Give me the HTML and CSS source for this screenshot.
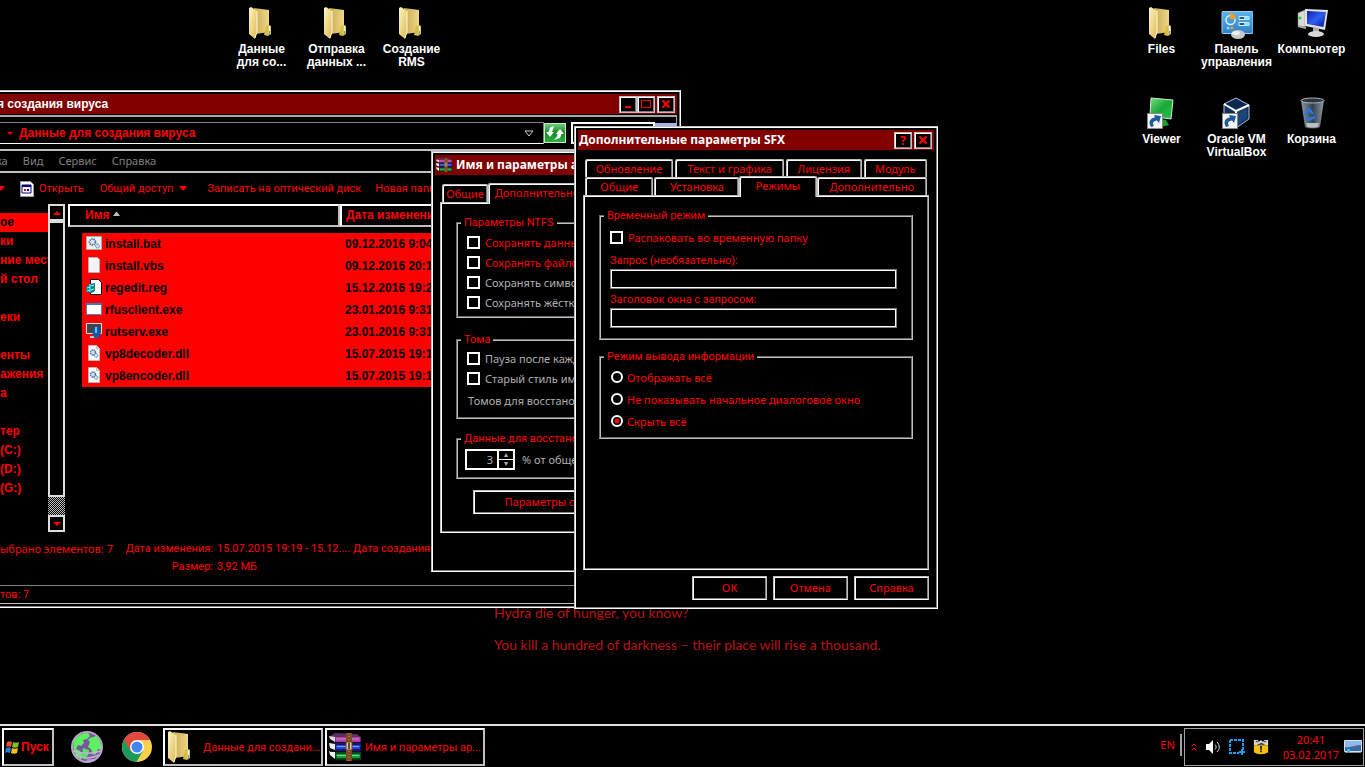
FILE: index.html
```html
<!DOCTYPE html>
<html lang="ru">
<head>
<meta charset="utf-8">
<title>Рабочий стол</title>
<link rel="stylesheet" href="styles.css">
</head>
<body>
<svg class="defs" aria-hidden="true">
  <defs>
    <linearGradient id="gf" x1="0" x2="1" y1="0" y2="1"><stop offset="0" stop-color="#fff6c4"/><stop offset="1" stop-color="#dcb84e"/></linearGradient>
    <linearGradient id="gb" x1="0" x2="1" y1="0" y2="0"><stop offset="0" stop-color="#c9a94e"/><stop offset="1" stop-color="#efd88a"/></linearGradient>
    <linearGradient id="gp" x1="0" x2="0" y1="0" y2="1"><stop offset="0" stop-color="#5cb4ea"/><stop offset="1" stop-color="#2f7fc4"/></linearGradient>
    <linearGradient id="gs" x1="0" x2="1" y1="0" y2="1"><stop offset="0" stop-color="#0a1ea8"/><stop offset=".5" stop-color="#3060f0"/><stop offset="1" stop-color="#0010a0"/></linearGradient>
    <linearGradient id="gg" x1="0" x2="1" y1="0" y2="1"><stop offset="0" stop-color="#6fe080"/><stop offset=".5" stop-color="#1aa838"/><stop offset="1" stop-color="#2cc24c"/></linearGradient>
    <linearGradient id="gt" x1="0" x2="1" y1="0" y2="0"><stop offset="0" stop-color="#8b9aa6"/><stop offset=".5" stop-color="#35424e"/><stop offset="1" stop-color="#8b9aa6"/></linearGradient>
    <symbol id="folder" viewBox="0 0 32 32">
      <path d="M8 1l15 2v22l-13 2z" fill="url(#gb)"/>
      <path d="M3 1l2-1 6 4v21l-2 7-6-5z" fill="url(#gf)"/>
      <path d="M11 4v21l-2 6" fill="none" stroke="#fffbe0"/>
      <path d="M20 19l3-1 2 1v8l-3 2-4-1z" fill="#d9bd3c"/>
      <path d="M23.500 19v8" stroke="#e8f4ff" stroke-width="1.500"/><path d="M23.500 24v3" stroke="#4aa0e0" stroke-width="1"/>
    </symbol>
    <symbol id="gears" viewBox="0 0 16 16">
      <path d="M2.500.5h8l3 3v12h-11z" fill="#fafafa" stroke="#b8b8b8"/><path d="M10.500.5v3h3" fill="#ddd" stroke="#b8b8b8"/>
      <circle cx="7" cy="7.500" r="2.500" fill="#cfe0f0" stroke="#44709c" stroke-dasharray="1.300 .7" stroke-width="1.500"/>
      <circle cx="10" cy="10.500" r="1.800" fill="#dce8f4" stroke="#44709c" stroke-dasharray="1 .5"/>
    </symbol>
    <symbol id="shortcut" viewBox="0 0 16 16">
      <path d="M.5.5h15v15H.5z" fill="#f4f4f4" stroke="#888"/>
      <path d="M4 14c-3-5-1-9 4-9.500L7 2l7 1-2 7-2-2.500C6 8 5 10 7 13z" fill="#1f5a9c"/>
    </symbol>
    <symbol id="books" viewBox="0 0 32 28">
      <path d="M1 3L6 0l22 1 4 3v5H6z" fill="#5a3060"/><path d="M6 4h25v5H7z" fill="#b040a0"/><path d="M7 6h23" stroke="#e080d0"/><path d="M0 3l6 1v5l-5-3z" fill="#ddd"/>
      <path d="M5 10h27v8H6z" fill="#181870"/><path d="M7 12h24v4H7z" fill="#2840e0"/><path d="M8 13.500h22" stroke="#80a0ff"/><path d="M0 10l6 1v6l-5-2z" fill="#eee"/>
      <path d="M5 19h27v8H7z" fill="#064818"/><path d="M7 21h24v4H8z" fill="#18983a"/><path d="M8 22.500h22" stroke="#60e080"/><path d="M0 18l6 1v7l-5-4z" fill="#eee"/>
      <path d="M1 9.500h30M1 18.500h30M5 27h26" stroke="#181018"/>
      <path d="M17 0h6v28h-6z" fill="#7a4a24"/><path d="M20 0v28" stroke="#c89860" stroke-dasharray="1 2"/>
      <rect x="17" y="9" width="6" height="8" fill="#d8c8a0" stroke="#604020"/><path d="M20 10v6" stroke="#402000" stroke-width="1.500"/>
    </symbol>
  </defs>
</svg>

<main class="desktop">
  <p class="wallpaper">Hydra die of hunger, you know?<br>You kill a hundred of darkness – their place will rise a thousand.</p>

  <div class="icons icons-left">
    <a class="icon" href="#"><svg><use href="#folder"/></svg><span>Данные<br>для со...</span></a>
    <a class="icon" href="#"><svg><use href="#folder"/></svg><span>Отправка<br>данных ...</span></a>
    <a class="icon" href="#"><svg><use href="#folder"/></svg><span>Создание<br>RMS</span></a>
  </div>
  <div class="icons icons-right">
    <a class="icon" href="#"><svg><use href="#folder"/></svg><span>Files</span></a>
    <a class="icon" href="#"><svg viewBox="0 0 32 32"><rect x="1" y="4.500" width="31" height="22" rx="1" fill="url(#gp)" stroke="#9ad0f4"/><circle cx="9.500" cy="13" r="4.500" fill="none" stroke="#d8f0ff" stroke-width="1.500"/><path d="M9 12V6c4 0 6 3 6 6z" fill="#f4a028"/><path d="M18 9.500h10v3H18zM18 15.500h10v3H18z" fill="#1c5c98" stroke="#d8f0ff"/><path d="M23 9.500h5v3h-5zM23 15.500h5v3h-5z" fill="#8fe0ff"/><circle cx="7" cy="21" r="1.500" fill="#80e0ff"/><circle cx="11" cy="21" r="1.500" fill="#f4a028"/><ellipse cx="17" cy="27.500" rx="7" ry="4.500" fill="#c8c8c8"/><ellipse cx="15" cy="26" rx="4" ry="2" fill="#eee"/></svg><span>Панель<br>управления</span></a>
    <a class="icon" href="#"><svg viewBox="0 0 32 32"><path d="M2 6l7-3v17l-7-1z" fill="#d8dadc" stroke="#888" stroke-width=".5"/><circle cx="4" cy="11" r="1.500" fill="#30d030"/><path d="M9 2l23 1-3 20-20-4z" fill="#e4e4e4"/><path d="M11 4l19 1-2.500 15L11 17z" fill="url(#gs)"/><path d="M17 20l6 1v5h-6z" fill="#aaa"/><ellipse cx="20" cy="27" rx="8" ry="3" fill="#d8d8d8"/><path d="M2 19l8 2" stroke="#aaa" stroke-width="2"/></svg><span>Компьютер</span></a>
    <a class="icon" href="#"><svg viewBox="0 0 32 32"><path d="M5 1l22 2-2 19-21-3z" fill="url(#gg)" stroke="#d8e8d8"/><path d="M14 22l6 1 3 5-8 2z" fill="#18a030"/><use href="#shortcut" x="1" y="16" width="16" height="16"/></svg><span>Viewer</span></a>
    <a class="icon" href="#"><svg viewBox="0 0 32 32"><path d="M15 1l13 7v14l-13 9L3 22V7z" fill="#16305c" stroke="#a8c0dc"/><path d="M3 7l12 7 13-6M15 14v17" stroke="#fff" stroke-width="2" fill="none"/><path d="M5 7l10-5 10 6-10 4z" fill="#0c2850"/><path d="M17 15l9-4v10l-9 7z" fill="#1c4478"/><use href="#shortcut" x="1" y="16" width="16" height="16"/></svg><span>Oracle VM<br>VirtualBox</span></a>
    <a class="icon" href="#"><svg viewBox="0 0 32 32"><path d="M5 3h23l-4 27c-4 2-11 2-15 0z" fill="url(#gt)"/><ellipse cx="16.500" cy="3.500" rx="11.500" ry="2.500" fill="#2c343c" stroke="#a8b4bc"/><path d="M9 18l4-6 4 5M10 20l5 3M14 22l5-2" stroke="#2878e0" stroke-width="2.500" fill="none"/><path d="M10 26h13l-1 4c-3 1-8 1-11 0z" fill="#b8c0c4"/></svg><span>Корзина</span></a>
  </div>

  <section class="window explorer">
    <header class="titlebar"><h1>я создания вируса</h1>
      <button class="cap" aria-label="Свернуть"><svg viewBox="0 0 12 10"><path d="M3 7h6v2H3z" fill="#f00"/></svg></button>
      <button class="cap" aria-label="Развернуть"><svg viewBox="0 0 12 10"><path d="M1.500 1.500h9v7h-9z" fill="none" stroke="#f00"/><path d="M1 1h10v1H1z" fill="#f00"/></svg></button>
      <button class="cap close" aria-label="Закрыть"><svg viewBox="0 0 12 10"><path d="M2.500 1.500l7 7M9.500 1.500l-7 7" stroke="#f00" stroke-width="2.200"/></svg></button>
    </header>
    <div class="explorer-frame">
      <div class="addressrow">
        <div class="address"><i class="tri"></i><b>Данные для создания вируса</b>
          <svg class="drop" viewBox="0 0 10 7"><path d="M1 1h8L5 6z" fill="none" stroke="#ccc"/></svg></div>
        <button class="refresh" aria-label="Обновить"><svg viewBox="0 0 20 18"><path d="M9 2L5 3.500 3.500 8H1l4 5 4-5H7l1-3zM15 5l4 5h-2.500l-1.500 4-6 2 3-3.500.5-2.500H11z" fill="#fff"/></svg></button>
        <input class="search" type="text" aria-label="Поиск"><button class="go" aria-label="Найти"></button>
      </div>
      <nav class="menubar"><a href="#">ка</a><a href="#">Вид</a><a href="#">Сервис</a><a href="#">Справка</a></nav>
      <div class="toolbar">
        <i class="tri"></i>
        <button class="open"><svg viewBox="0 0 14 16"><path d="M.5.5h10l3 3v12H.5z" fill="#fff" stroke="#999"/><path d="M2 4h9v8H2z" fill="#fff" stroke="#000080"/><path d="M2 4h9v2H2z" fill="#000080"/><path d="M4 8h2v2H4z" fill="#c00"/><path d="M7 8h2v2H7z" fill="#00c"/></svg>Открыть</button>
        <button class="share">Общий доступ<i class="tri"></i></button>
        <button class="burn">Записать на оптический диск</button>
        <button>Новая папка</button>
      </div>
      <div class="content">
        <ul class="tree">
          <li class="sel">ое</li><li>ки</li><li>ние места</li><li>й стол</li><li></li><li>еки</li><li></li><li>енты</li><li>ажения</li><li>а</li><li></li><li>тер</li><li>(C:)</li><li>(D:)</li><li>(G:)</li>
        </ul>
        <div class="scroll"><button aria-label="Вверх"><i class="tri up"></i></button><div class="thumb"></div><div class="track"></div><button aria-label="Вниз"><i class="tri"></i></button></div>
        <table class="files">
          <thead><tr><th>Имя <svg class="sort" viewBox="0 0 7 4"><path d="M0 4l3-4h1l3 4z" fill="#c0c0c0"/></svg></th><th>Дата изменения</th></tr></thead>
          <tbody>
            <tr><td><svg viewBox="0 0 16 16"><path d="M.5 1.500h15v13H.5z" fill="#f0f0f0" stroke="#aaa"/><circle cx="6.500" cy="7" r="3" fill="#dce8f4" stroke="#44709c" stroke-width="1.800" stroke-dasharray="1.300 .8"/><circle cx="11.500" cy="11" r="2" fill="#cde" stroke="#44709c" stroke-dasharray="1 .6"/></svg>install.bat</td><td>09.12.2016 9:04</td></tr>
            <tr><td><svg viewBox="0 0 16 16"><path d="M2.500.5h9l2 2v13h-11z" fill="#f4f4f4" stroke="#b0b0b0"/></svg>install.vbs</td><td>09.12.2016 20:14</td></tr>
            <tr><td><svg viewBox="0 0 16 16"><path d="M4.500.5h8l3 3v12h-11z" fill="#fff" stroke="#111"/><path d="M0 8l3-3 6-1v8l-3 2-6-1z" fill="#108080"/><path d="M1 9l3-1M5 7l3-1M1 12l3-1M5 11l3-1M4 5v8" stroke="#8ff"/></svg>regedit.reg</td><td>15.12.2016 19:20</td></tr>
            <tr><td><svg viewBox="0 0 16 16"><path d="M.5 2.500h15v11H.5z" fill="#fff" stroke="#5080b8"/><path d="M0 2h16v2H0z" fill="#3878c0"/></svg>rfusclient.exe</td><td>23.01.2016 9:31</td></tr>
            <tr><td><svg viewBox="0 0 16 16"><path d="M.5.5h15v10H.5z" fill="#404448" stroke="#ddd"/><path d="M4 13h6v2H4z" fill="#ccc"/><ellipse cx="10.500" cy="9.500" rx="4" ry="6" fill="#1058a8"/><path d="M10 4v6" stroke="#60c0ff" stroke-width="2"/></svg>rutserv.exe</td><td>23.01.2016 9:31</td></tr>
            <tr><td><svg><use href="#gears"/></svg>vp8decoder.dll</td><td>15.07.2015 19:19</td></tr>
            <tr><td><svg><use href="#gears"/></svg>vp8encoder.dll</td><td>15.07.2015 19:19</td></tr>
          </tbody>
        </table>
      </div>
      <dl class="details">
        <dt class="count">ыбрано элементов: 7</dt><dt>Дата изменения:</dt><dd>15.07.2015 19:19 - 15.12....</dd><dt class="made">Дата создания:</dt>
        <dt class="size">Размер:</dt><dd>3,92 МБ</dd>
      </dl>
      <footer class="status">тов: 7</footer>
    </div>
  </section>

  <section class="window archive">
    <header class="titlebar"><svg class="appicon"><use href="#books"/></svg><h1>Имя и параметры архива</h1></header>
    <div class="tabs"><button class="tab">Общие</button><button class="tab active">Дополнительно</button></div>
    <div class="panel">
      <fieldset class="ntfs"><legend>Параметры NTFS</legend>
        <label><input type="checkbox">Сохранять данные о защите</label>
        <label><input type="checkbox">Сохранять файловые потоки</label>
        <label class="off"><input type="checkbox">Сохранять символьные ссылки</label>
        <label class="off"><input type="checkbox">Сохранять жёсткие ссылки</label>
      </fieldset>
      <fieldset class="volumes"><legend>Тома</legend>
        <label class="off"><input type="checkbox">Пауза после каждого тома</label>
        <label class="off"><input type="checkbox">Старый стиль имён томов</label>
        <p class="off">Томов для восстановления</p>
      </fieldset>
      <fieldset class="recovery"><legend>Данные для восстановления</legend>
        <label class="off"><span class="spin"><input type="text" value="3"><span class="arrows"><i>▴</i><i>▾</i></span></span>% от общего размера</label>
      </fieldset>
      <button class="btn compress">Параметры сжатия...</button>
    </div>
  </section>

  <section class="window sfx">
    <header class="titlebar"><h1>Дополнительные параметры SFX</h1>
      <button class="cap help" aria-label="Помощь">?</button>
      <button class="cap" aria-label="Закрыть"><svg viewBox="0 0 12 10"><path d="M2.500 1.500l7 7M9.500 1.500l-7 7" stroke="#f00" stroke-width="2.200"/></svg></button>
    </header>
    <div class="tabs back"><button class="tab">Обновление</button><button class="tab">Текст и графика</button><button class="tab">Лицензия</button><button class="tab">Модуль</button></div>
    <div class="tabs front"><button class="tab">Общие</button><button class="tab">Установка</button><button class="tab active">Режимы</button><button class="tab">Дополнительно</button></div>
    <div class="panel">
      <fieldset class="temp"><legend>Временный режим</legend>
        <label class="check"><input type="checkbox">Распаковать во временную папку</label>
        <label class="field">Запрос (необязательно):<input type="text"></label>
        <label class="field">Заголовок окна с запросом:<input type="text"></label>
      </fieldset>
      <fieldset class="output"><legend>Режим вывода информации</legend>
        <label><input type="radio" name="mode">Отображать всё</label>
        <label><input type="radio" name="mode">Не показывать начальное диалоговое окно</label>
        <label><input type="radio" name="mode" checked>Скрыть всё</label>
      </fieldset>
    </div>
    <div class="actions"><button class="btn">OK</button><button class="btn">Отмена</button><button class="btn">Справка</button></div>
  </section>
</main>

<footer class="taskbar">
  <button class="start"><svg viewBox="0 0 16 16"><path d="M3 3c2-1 3-1 5 0L7 8C5 7 4 7 2 8z" fill="#f05020"/><path d="M9 3c2 1 4 1 6 0l-1 5c-2 1-4 1-6 0z" fill="#80c020"/><path d="M2 9c2-1 3-1 5 0l-1 5c-2-1-4-1-5 0z" fill="#2080e0"/><path d="M8 9c2 1 4 1 6 0l-1 5c-2 1-4 1-6 0z" fill="#f8c010"/></svg>Пуск</button>
  <button class="quick" aria-label="Глобус"><svg viewBox="0 0 32 32"><circle cx="16" cy="16" r="16" fill="#b7a5c9"/><circle cx="16" cy="16" r="14" fill="#7a55a0"/><path d="M3 10C6 4 12 2 17 2l2 3-3 3-4 1 1 3-3 3-3-1-2 4 4 2 3 4-2 5C4 25 1 18 3 10zM19 7l6-2c4 4 6 9 5 14l-3-1-2 5-3 1-2-6-3-2 2-5-2-2z" fill="#5ef060"/><path d="M12 17l6 2-1 5-3 5-3-4z" fill="#54e858"/><path d="M2 20c9 3 19 3 28 0M4 24c8 4 16 4 24 0M16 29h8" stroke="#c4b0d8" stroke-width="1.500" fill="none"/></svg></button>
  <button class="quick" aria-label="Chrome"><svg viewBox="0 0 32 32"><circle cx="16" cy="16" r="15" fill="#fdd04c"/><path d="M16 16L3 8.500A15 15 0 0 1 29 8.500H16z" fill="#e04a3c"/><path d="M16 16L3 8.500A15 15 0 0 0 15.500 31l6.500-11z" fill="#1c9c5c"/><path d="M3 8.500L9.500 20 16 9h13A15 15 0 0 0 3 8.500z" fill="#e04a3c"/><circle cx="16" cy="16" r="7" fill="#fff"/><circle cx="16" cy="16" r="5.500" fill="#4285f4"/></svg></button>
  <button class="task"><svg><use href="#folder"/></svg><span>Данные для создани...</span></button>
  <button class="task rar"><svg><use href="#books"/></svg><span>Имя и параметры ар...</span></button>
  <span class="lang">EN</span>
  <div class="tray">
    <svg class="chev" viewBox="0 0 6 8"><path d="M.5 3.500L3 1l2.500 2.500M.5 7.500L3 5l2.500 2.500" stroke="#f00" fill="none"/></svg>
    <svg viewBox="0 0 16 16"><path d="M1 5h3l4-4v14l-4-4H1z" fill="#fff"/><path d="M10 5.500c1.500 1.500 1.500 3.500 0 5M12 3c3 3 3 7 0 10" stroke="#ddd" fill="none"/></svg>
    <svg viewBox="0 0 16 16"><path d="M1 1h13v10M1 1v13h9" fill="none" stroke="#18a0f0" stroke-width="2" stroke-dasharray="3 1"/><path d="M13 10v6M10 13h6" stroke="#18a0f0" stroke-width="2"/></svg>
    <svg viewBox="0 0 18 18"><path d="M1 1h4l2 2 2-2 2 2 2-2h4v6H1z" fill="#d8d8d8"/><path d="M3 3h3M8 5h3M12 3h3M5 6h8" stroke="#222"/><path d="M1 7h16v8c-4 3-12 3-16 0z" fill="#f8c010"/><path d="M9 8v4M9 13v2" stroke="#222" stroke-width="2"/></svg>
    <time>20:41<br>03.02.2017</time>
    <svg class="mon" viewBox="0 0 18 14"><path d="M.5.5h17v11H.5z" fill="#3c68a8" stroke="#d8e4f0"/><path d="M1 1h16v4c-6 0-10 3-16 2z" fill="#90b8e4"/><path d="M3 9h3v3H3z" fill="#40c0f0"/><path d="M1 12.500h16" stroke="#888"/></svg>
  </div>
</footer>
</body>
</html>
```
FILE: styles.css
```css
* { box-sizing: border-box; }
html, body { height: 100%; }
body {
  margin: 0;
  display: flex;
  flex-direction: column;
  overflow: hidden;
  background: #000;
  color: #f00;
  font: 11px/13px "Noto Sans", sans-serif;
}
h1, p, ul, dl, dd { margin: 0; padding: 0; }
svg { display: block; flex: none; }
a { color: inherit; text-decoration: none; }
button, input { font: inherit; color: inherit; background: none; border: 0; padding: 0; margin: 0; border-radius: 0; }
.defs { position: absolute; width: 0; height: 0; }
.desktop { position: relative; flex: 1; overflow: hidden; }

.wallpaper {
  position: absolute;
  left: 494px;
  top: 597px;
  font: 14px/32px Lato, "Liberation Sans", sans-serif;
  color: #b81414;
  white-space: nowrap;
}

/* desktop icons */
.icons { position: absolute; top: 7px; display: grid; grid-template-columns: repeat(3, 75px); grid-auto-rows: 90px; }
.icons-left { left: 224px; }
.icons-right { right: 16px; }
.icon { display: flex; flex-direction: column; align-items: center; gap: 4px; color: #fff; font: bold 12px/13px "Liberation Sans", sans-serif; text-align: center; white-space: nowrap; }
.icon svg { width: 32px; height: 32px; }

/* windows */
.window {
  position: absolute;
  padding: 3px;
  display: flex;
  flex-direction: column;
  background: #000;
  border: 1px solid;
  border-color: #c0c0c0 #fff #fff #c0c0c0;
  box-shadow: inset 1px 1px #fff, inset -1px -1px #808080;
}
.explorer { left: -8px; top: 90px; width: 689px; height: 518px; }
.archive { left: 431px; top: 151px; width: 364px; height: 421px; }
.sfx { left: 574px; top: 126px; width: 364px; height: 483px; }

.titlebar { display: flex; align-items: center; height: 20px; flex: none; padding: 0 2px 0 1px; background: #800000; color: #fff; }
.titlebar h1 { flex: 1; font: bold 12px/18px "Noto Sans", sans-serif; white-space: nowrap; }
.explorer .titlebar h1 { font: bold 12px/18px "Liberation Sans", sans-serif; }
.archive .titlebar h1 { padding-left: 4px; }
.appicon { width: 16px; height: 16px; }
.cap { width: 18px; height: 17px; display: flex; align-items: center; justify-content: center; background: #000; border: 1px solid #c0c0c0; box-shadow: inset 1px 1px #fff, inset -1px -1px #808080; }
.cap svg { width: 12px; height: 10px; }
.cap.close, .cap.help + .cap { margin-left: 2px; }
.help { color: #f00; font-weight: bold; font-size: 13px; }

.btn { height: 24px; padding-bottom: 2px; border: 1px solid #c0c0c0; box-shadow: inset 1px 1px #fff, inset -1px -1px #808080; border-bottom-color: #fff; }
.tri { display: block; border: 4px solid transparent; border-top-color: #f00; border-bottom: 0; }
.tri.up { border: 4px solid transparent; border-bottom-color: #f00; border-top: 0; }

/* explorer */
.explorer-frame { flex: 1; display: flex; flex-direction: column; margin-top: 1px; border-top: 2px solid #a8a8a8; border-right: 1px solid #a8a8a8; border-bottom: 1px solid #c0c0c0; min-height: 0; }
.addressrow { display: flex; align-items: center; height: 34px; border-bottom: 2px solid #c0c0c0; flex: none; }
.address { display: flex; align-items: center; gap: 6px; flex: 1; height: 22px; padding-left: 10px; padding-right: 9px; border: 1px solid #808080; border-bottom-color: #fff; font: 12px/20px "Liberation Sans", sans-serif; }
.address b { flex: 1; }
.address .tri { border-width: 3px 3px 0; }
.drop { width: 10px; height: 7px; }
.refresh { width: 22px; height: 20px; background: linear-gradient(#70c878, #148a28 50%, #30b040); border: 1px solid #c8e8c8; }
.refresh svg { width: 20px; height: 18px; }
.search { width: 84px; height: 22px; margin-left: 5px; border: 2px solid #fff; }
.go { width: 21px; height: 20px; background: #a8b0f0; }
.menubar { display: flex; gap: 15px; height: 22px; border-bottom: 2px solid #c0c0c0; color: #808080; line-height: 20px; flex: none; }
.toolbar { display: flex; align-items: center; height: 31px; padding-left: 1px; white-space: nowrap; flex: none; font-family: Roboto, sans-serif; }
.toolbar .tri { border-width: 5px 4px 0; }
.toolbar button { display: flex; align-items: center; gap: 5px; }
.toolbar .open { margin-left: 15px; }
.open svg { width: 14px; height: 16px; }
.toolbar .share { margin-left: 16px; gap: 6px; }
.toolbar .burn { margin: 0 14px 0 20px; }
.content { display: flex; height: 328px; flex: none; }
.tree { width: 52px; padding-top: 9px; list-style: none; overflow: hidden; white-space: nowrap; font: bold 12px/19px "Liberation Sans", sans-serif; }
.tree li { height: 19px; padding-left: 4px; }
.tree .sel { background: #f00; color: #000; }
.scroll { width: 17px; display: flex; flex-direction: column; }
.scroll button { height: 17px; display: flex; align-items: center; justify-content: center; border: 2px solid #ddd; }
.scroll .thumb { height: 276px; border: 2px solid #ddd; }
.scroll .track { flex: 1; background: repeating-conic-gradient(#c0c0c0 0 25%, #000 0 50%) 0 0 / 2px 2px; }
.files { flex: 1; align-self: flex-start; margin-left: 3px; border-collapse: separate; border-spacing: 0; table-layout: fixed; width: 100%; font: bold 12px/22px "Liberation Sans", sans-serif; text-align: left; white-space: nowrap; }
.files th { height: 23px; padding: 0 4px 0 15px; border: 2px solid #fff; border-color: #fff #c0c0c0 #c0c0c0 #fff; color: #f00; line-height: 19px; }
.files th:first-child { width: 272px; }
.files th + th { padding-left: 4px; }
.files .sort { display: inline-block; width: 7px; height: 4px; vertical-align: 3px; }
.files tbody::before { content: ""; display: block; height: 6px; }
.files td { height: 22px; padding: 0; color: #000; background: #f00; }
.files td:first-child { padding-left: 4px; border-left: 14px solid #000; }
.files td + td { padding-left: 5px; }
.files td svg { display: inline-block; width: 16px; height: 16px; margin-right: 3px; vertical-align: -3px; }
.details { display: grid; grid-template-columns: 123px 98px 136px 1fr; grid-auto-rows: 18px; padding-top: 8px; align-content: start; flex: 1; line-height: 18px; white-space: nowrap; font-family: Roboto, sans-serif; }
.details .count { padding-left: 4px; font-family: "Noto Sans", sans-serif; }
.details dt + dt { text-align: right; padding-right: 4px; }
.details dt.made { text-align: left; }
.details .size { grid-column: 2; text-align: right; padding-right: 4px; }
.status { height: 18px; border-top: 1px solid #808080; padding-left: 4px; line-height: 18px; flex: none; font-family: Roboto, sans-serif; }

/* tabs and panels */
.tabs { display: flex; align-items: flex-end; }
.tab { height: 18px; border: 1px solid #c0c0c0; border-bottom: 0; border-radius: 2px 2px 0 0; box-shadow: inset 1px 1px #fff, inset -1px 0 #808080; background: #000; white-space: nowrap; }
.tab.active { position: relative; height: 21px; margin-bottom: -2px; padding-bottom: 4px; }
.panel { border: 1px solid #c0c0c0; box-shadow: inset 1px 1px #fff, inset -1px -1px #808080; border-bottom-color: #fff; display: flex; flex-direction: column; }
fieldset { margin: 0; padding: 0 9px; border: 2px groove #c0c0c0; min-width: 0; }
legend { padding: 0 3px; margin-left: -6px; line-height: 13px; font-family: Roboto, sans-serif; }
label { display: flex; align-items: center; gap: 5px; white-space: nowrap; }
.off { color: #b0b0b0; }
input[type="checkbox"] { appearance: none; width: 13px; height: 13px; border: 2px solid #fff; outline: 0; flex: none; }
input[type="radio"] { appearance: none; width: 12px; height: 12px; margin-left: 1px; border: 2px solid #fff; border-radius: 50%; flex: none; }
input[type="radio"]:checked { background: radial-gradient(#f00 2px, #000 3px); }

.archive .tabs { margin-top: 7px; padding-left: 7px; height: 20px; }
.archive .tab { width: 46px; }
.archive .tab.active { width: 98px; }
.archive .panel { height: 331px; margin: 0 5px; padding: 13px 15px; }
.archive label { height: 20px; }
.ntfs { height: 102px; padding-top: 3px; }
.volumes { height: 86px; margin-top: 15px; padding-top: 2px; }
.volumes p { margin-top: 6px; padding-left: 1px; }
.recovery { height: 47px; margin-top: 13px; padding: 0 7px; }
.recovery legend { margin-left: -4px; }
.recovery label { height: 28px; gap: 7px; }
.spin { width: 50px; height: 21px; display: flex; border: 2px solid #fff; }
.spin input { width: 30px; text-align: right; padding-right: 4px; }
.arrows { flex: 1; display: grid; gap: 1px; background: #fff; padding-left: 2px; }
.arrows i { background: #000; font: 8px/8px "DejaVu Sans", sans-serif; text-align: center; }
.compress { width: 174px; margin: 11px 0 0 17px; }

.sfx .tabs { margin: 0 7px; }
.sfx .back { padding-top: 9px; gap: 2px; }
.sfx .front { height: 18px; }
.sfx .back .tab:nth-child(1) { flex: 88; }
.sfx .back .tab:nth-child(2) { flex: 110; }
.sfx .back .tab:nth-child(3) { flex: 75; }
.sfx .back .tab:nth-child(4) { flex: 63; }
.sfx .front .tab:nth-child(1) { flex: 68; margin-right: 1px; }
.sfx .front .tab:nth-child(2) { flex: 85; }
.sfx .front .tab:nth-child(3) { flex: 77; }
.sfx .front .tab:nth-child(4) { flex: 111; }
.sfx .panel { flex: 1; margin: 0 5px; padding: 13px 15px; }
.temp { height: 131px; }
.temp .check { height: 30px; margin-bottom: 2px; }
.temp .field { flex-direction: column; align-items: stretch; gap: 2px; margin-bottom: 4px; font-family: Roboto, sans-serif; }
.temp .field input { height: 20px; margin-right: 5px; border: 1px solid #808080; box-shadow: inset 0 0 0 1px #fff; }
.output { height: 89px; margin-top: 10px; padding-top: 3px; }
.output label { height: 22px; gap: 4px; }
.actions { display: flex; justify-content: flex-end; gap: 6px; padding: 6px 5px 5px; }
.actions .btn { width: 75px; }

/* taskbar */
.taskbar { height: 43px; flex: none; display: flex; align-items: flex-start; border-top: 2px solid #e0e0e0; padding: 2px 1px 0 2px; }
.start, .task { height: 38px; display: flex; align-items: center; border: 2px solid #fff; border-color: #fff #c0c0c0 #c0c0c0 #fff; white-space: nowrap; }
.start { width: 52px; font: bold 12px/16px "Liberation Sans", sans-serif; gap: 1px; }
.start svg { width: 16px; height: 16px; }
.quick { width: 32px; margin-top: 3px; margin-left: 17px; }
.quick + .quick { margin-left: 18px; }
.quick svg { width: 32px; height: 32px; }
.task { width: 160px; margin-left: 10px; gap: 6px; font-family: Roboto, sans-serif; }
.task svg { width: 32px; height: 32px; }
.task + .task { margin-left: 2px; gap: 4px; padding-left: 2px; }
.lang { margin: 6px 0 0 auto; padding: 4px 5px 4px 0; border-right: 2px solid #a0a0a0; line-height: 14px; }
.tray { display: flex; align-items: center; gap: 8px; height: 38px; margin-left: 2px; padding: 0 1px 0 6px; border: 1px solid #a0a0a0; }
.tray svg { width: 16px; height: 16px; }
.tray .chev { width: 6px; height: 8px; }
.tray .mon { width: 18px; height: 14px; }
.tray time { padding-left: 6px; margin-right: -3px; text-align: center; line-height: 15px; }
```
